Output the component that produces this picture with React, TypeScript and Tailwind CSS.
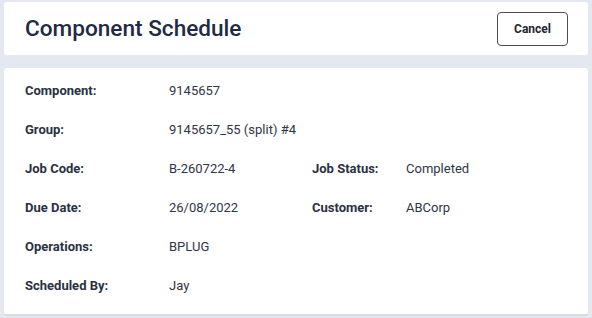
import React from 'react';

const rows: { label: string; value: string; label2?: string; value2?: string }[] = [
  { label: 'Component:', value: '9145657' },
  { label: 'Group:', value: '9145657_55 (split) #4' },
  { label: 'Job Code:', value: 'B-260722-4', label2: 'Job Status:', value2: 'Completed' },
  { label: 'Due Date:', value: '26/08/2022', label2: 'Customer:', value2: 'ABCorp' },
  { label: 'Operations:', value: 'BPLUG' },
  { label: 'Scheduled By:', value: 'Jay' },
];

export default function App() {
  return (
    <div
      className="w-[592px] h-[318px] bg-[#e4e8f0] px-[4px] pt-[2px] flex flex-col gap-[13px]"
      style={{ fontFamily: 'Roboto, "Liberation Sans", sans-serif' }}
    >
      {/* Header */}
      <div className="h-[53px] bg-white rounded-[3px] flex items-center justify-between pl-[21px] pr-[20px]">
        <h1 className="text-[22.6px] font-medium text-[#1f2a44]">Component Schedule</h1>
        <button className="w-[71px] h-[34px] border border-[#4a4d55] rounded-[4px] text-[12px] font-bold text-[#222630] bg-white">
          Cancel
        </button>
      </div>

      {/* Details */}
      <div className="h-[248px] bg-white rounded-[3px] pt-[3px] pl-[21px] border-b-2 border-[#d8dce4]">
        {rows.map((r) => (
          <div key={r.label} className="h-[39px] flex items-center text-[13px]">
            <div className="w-[144px] font-bold text-[#2a3142]">{r.label}</div>
            <div className="w-[143px] text-[#2f3545]">{r.value}</div>
            {r.label2 && (
              <>
                <div className="w-[94px] font-bold text-[#2a3142]">{r.label2}</div>
                <div className="text-[#2f3545]">{r.value2}</div>
              </>
            )}
          </div>
        ))}
      </div>
    </div>
  );
}
